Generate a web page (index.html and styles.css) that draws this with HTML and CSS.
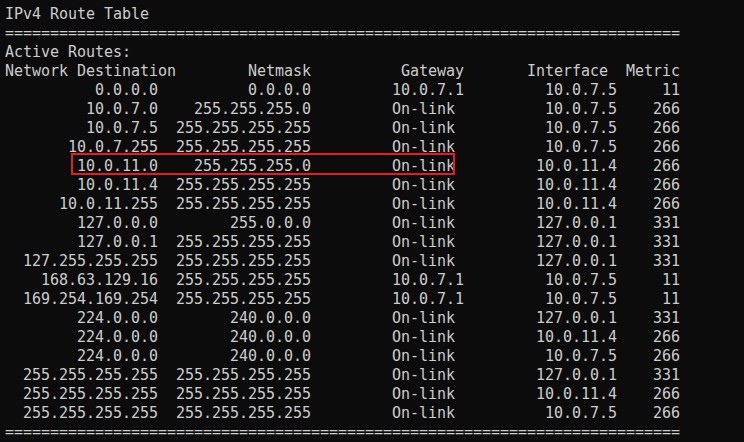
FILE: index.html
```html
<!DOCTYPE html>
<html>
<head>
<meta charset="utf-8">
<link rel="stylesheet" href="styles.css">
</head>
<body>
<div class="console">
<pre class="out">IPv4 Route Table
===========================================================================
Active Routes:
Network Destination        Netmask          Gateway       Interface  Metric
          0.0.0.0          0.0.0.0         10.0.7.1         10.0.7.5     11
         10.0.7.0    255.255.255.0         On-link          10.0.7.5    266
         10.0.7.5  255.255.255.255         On-link          10.0.7.5    266
       10.0.7.255  255.255.255.255         On-link          10.0.7.5    266
        10.0.11.0    255.255.255.0         On-link         10.0.11.4    266
        10.0.11.4  255.255.255.255         On-link         10.0.11.4    266
      10.0.11.255  255.255.255.255         On-link         10.0.11.4    266
        127.0.0.0        255.0.0.0         On-link         127.0.0.1    331
        127.0.0.1  255.255.255.255         On-link         127.0.0.1    331
  127.255.255.255  255.255.255.255         On-link         127.0.0.1    331
    168.63.129.16  255.255.255.255         10.0.7.1         10.0.7.5     11
  169.254.169.254  255.255.255.255         10.0.7.1         10.0.7.5     11
        224.0.0.0        240.0.0.0         On-link         127.0.0.1    331
        224.0.0.0        240.0.0.0         On-link         10.0.11.4    266
        224.0.0.0        240.0.0.0         On-link          10.0.7.5    266
  255.255.255.255  255.255.255.255         On-link         127.0.0.1    331
  255.255.255.255  255.255.255.255         On-link         10.0.11.4    266
  255.255.255.255  255.255.255.255         On-link          10.0.7.5    266
===========================================================================</pre>
<div class="highlight"></div>
</div>
</body>
</html>
```

FILE: styles.css
```css
html, body {
  margin: 0;
  padding: 0;
  background: #0c0c0c;
}

.console {
  position: relative;
  width: 744px;
  height: 442px;
  overflow: hidden;
  background: #0c0c0c;
}

.out {
  margin: 0;
  padding: 5px 0 0 5px;
  font-family: "DejaVu Sans Mono", "Liberation Mono", monospace;
  font-size: 15px;
  letter-spacing: -0.03px;
  line-height: 19px;
  color: #cccccc;
}

.highlight {
  position: absolute;
  left: 71px;
  top: 153px;
  width: 380px;
  height: 18px;
  border: 2px solid #e31d26;
}
```
